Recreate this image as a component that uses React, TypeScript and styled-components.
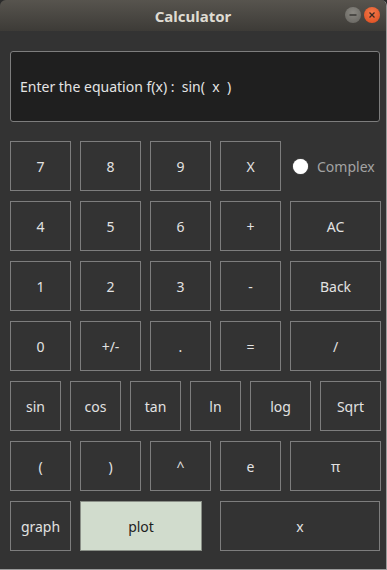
import React, { useState } from 'react';
import styled, { createGlobalStyle } from 'styled-components';

const GlobalStyle = createGlobalStyle`
    html, body {
        margin: 0;
        padding: 0;
        background: #2b2b2b;
    }
    body {
        font-family: 'Noto Sans', 'Open Sans', sans-serif;
    }
`;

const Window = styled.div`
    width: 387px;
    height: 570px;
    display: flex;
    flex-direction: column;
    background: #333333;
    border-radius: 6px 6px 0 0;
    overflow: hidden;
    box-sizing: border-box;
    border-right: 1px solid #9a9a9a;
    border-bottom: 1px solid #9a9a9a;
`;

const TitleBar = styled.header`
    height: 31px;
    flex-shrink: 0;
    position: relative;
    display: flex;
    align-items: center;
    justify-content: center;
    background: linear-gradient(#57544e, #3d3b37);
    color: #dfdbd2;
    font-size: 15px;
    font-weight: bold;
`;

const TitleButtons = styled.div`
    position: absolute;
    right: 6px;
    top: 7px;
    display: flex;
    gap: 3px;
`;

const TitleCircle = styled.div<{ $close?: boolean }>`
    width: 16px;
    height: 16px;
    border-radius: 50%;
    display: flex;
    align-items: center;
    justify-content: center;
    background: ${(p) =>
        p.$close
            ? 'radial-gradient(circle at 50% 35%, #f37a4b, #dc4a1c)'
            : 'radial-gradient(circle at 50% 35%, #8a8882, #65635e)'};
`;

const Body = styled.main`
    flex: 1;
    padding: 20px 6px 0 10px;
    display: flex;
    flex-direction: column;
    gap: 10px;
`;

const Display = styled.div`
    height: 71px;
    box-sizing: border-box;
    margin-bottom: 9px;
    background: #1f1f1f;
    border: 1px solid #7d7d7d;
    border-radius: 3px;
    display: flex;
    align-items: center;
    padding-left: 9px;
    color: #e4e4e4;
    font-size: 14px;
    white-space: pre;
`;

const Row = styled.div`
    display: flex;
    gap: 9px;
    height: 50px;
`;

const Key = styled.button<{ $w: number; $light?: boolean; $gapLeft?: number }>`
    width: ${(p) => p.$w}px;
    height: 50px;
    flex-shrink: 0;
    margin: 0 0 0 ${(p) => p.$gapLeft ?? 0}px;
    padding: 0;
    box-sizing: border-box;
    border: 1px solid ${(p) => (p.$light ? '#8a8f87' : '#7d7d7d')};
    background: ${(p) => (p.$light ? '#d1dccd' : '#333333')};
    color: ${(p) => (p.$light ? '#1e1e1e' : '#e2e2e2')};
    font-family: 'Noto Sans', 'Open Sans', sans-serif;
    font-size: 14px;
    cursor: pointer;
`;

const RadioLabel = styled.label`
    display: flex;
    align-items: center;
    gap: 9px;
    padding-left: 3px;
    color: #a3a3a3;
    font-size: 14px;
`;

const RadioDot = styled.span<{ $on: boolean }>`
    width: 15px;
    height: 15px;
    border-radius: 50%;
    background: #ffffff;
    box-shadow: 0 0 1px #cccccc;
    display: flex;
    align-items: center;
    justify-content: center;
    &::after {
        content: '';
        width: 6px;
        height: 6px;
        border-radius: 50%;
        background: ${(p) => (p.$on ? '#333333' : 'transparent')};
    }
`;

type KeyDef = { label: string; w: number; light?: boolean; gapLeft?: number };

const wide = (label: string): KeyDef => ({ label, w: 91 });
const std = (label: string): KeyDef => ({ label, w: 61 });

const rows: KeyDef[][] = [
    ['4', '5', '6', '+'].map(std).concat(wide('AC')),
    ['1', '2', '3', '-'].map(std).concat(wide('Back')),
    ['0', '+/-', '.', '='].map(std).concat(wide('/')),
    [
        { label: 'sin', w: 51 },
        { label: 'cos', w: 51 },
        { label: 'tan', w: 51 },
        { label: 'ln', w: 51 },
        { label: 'log', w: 61 },
        { label: 'Sqrt', w: 61 },
    ],
    ['(', ')', '^', 'e'].map(std).concat(wide('π')),
    [
        { label: 'graph', w: 61 },
        { label: 'plot', w: 122, light: true },
        { label: 'x', w: 160, gapLeft: 9 },
    ],
];

function App() {
    const [complex, setComplex] = useState(false);

    return (
        <Window>
            <GlobalStyle />
            <TitleBar>
                Calculator
                <TitleButtons>
                    <TitleCircle>
                        <svg width="8" height="8" viewBox="0 0 8 8">
                            <path d="M0.5 4h7" stroke="#3a3936" strokeWidth="1.4" />
                        </svg>
                    </TitleCircle>
                    <TitleCircle $close>
                        <svg width="8" height="8" viewBox="0 0 8 8">
                            <path d="M1.5 1.5l5 5M6.5 1.5l-5 5" stroke="#3a2a22" strokeWidth="1.3" />
                        </svg>
                    </TitleCircle>
                </TitleButtons>
            </TitleBar>
            <Body>
                <Display>{'Enter the equation f(x) :  sin(  x  )'}</Display>
                <Row>
                    {['7', '8', '9', 'X'].map((k) => (
                        <Key key={k} $w={61}>
                            {k}
                        </Key>
                    ))}
                    <RadioLabel onClick={() => setComplex(!complex)}>
                        <RadioDot $on={complex} />
                        Complex
                    </RadioLabel>
                </Row>
                {rows.map((row, i) => (
                    <Row key={i}>
                        {row.map((k) => (
                            <Key key={k.label} $w={k.w} $light={k.light} $gapLeft={k.gapLeft}>
                                {k.label}
                            </Key>
                        ))}
                    </Row>
                ))}
            </Body>
        </Window>
    );
}

export default App;
